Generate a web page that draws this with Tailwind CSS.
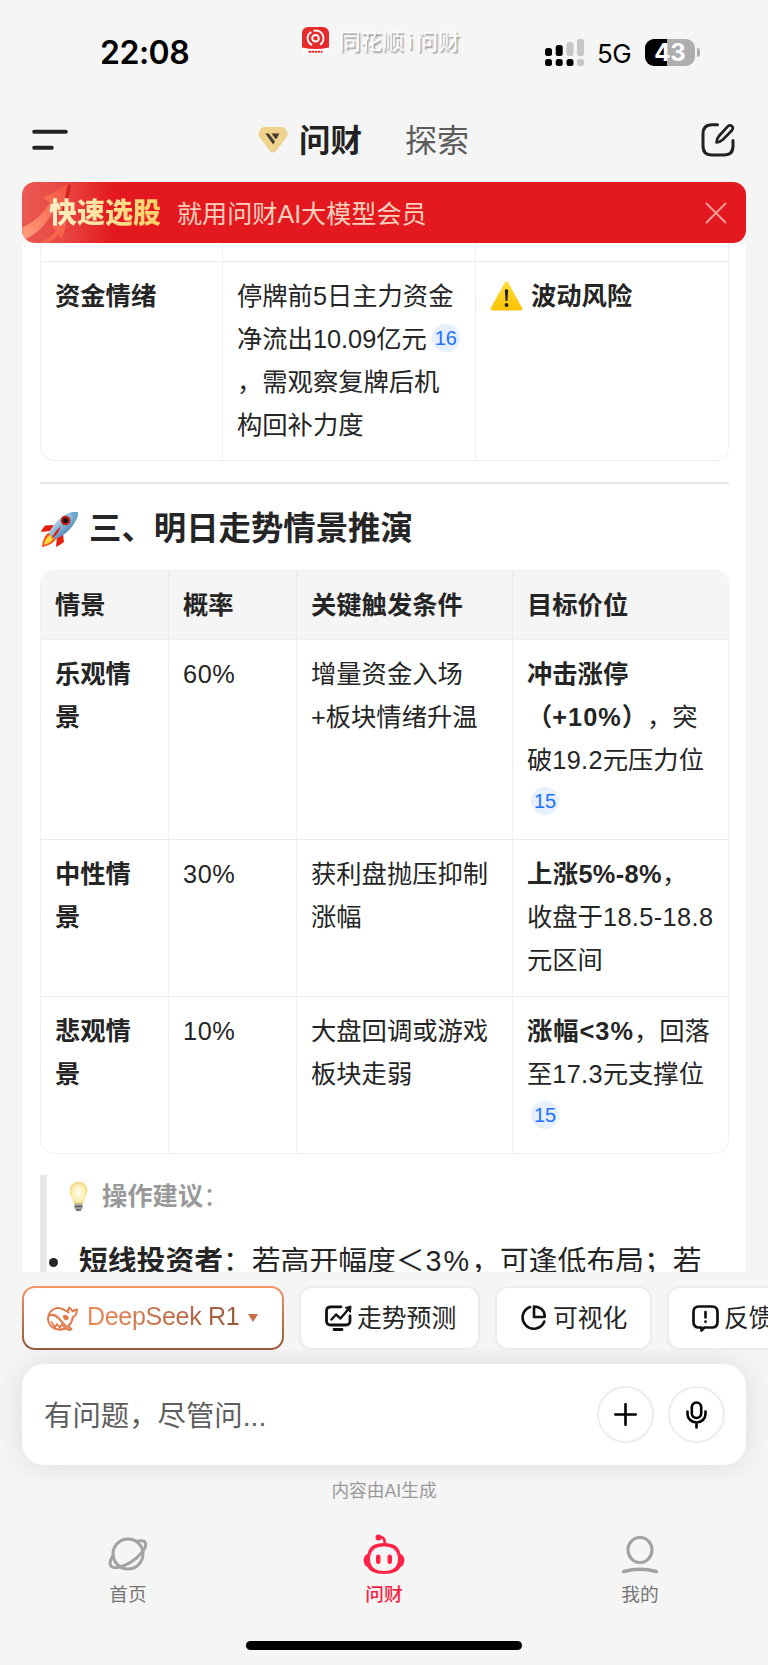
<!DOCTYPE html>
<html lang="zh-CN">
  <head>
    <meta charset="UTF-8" />
    <meta name="viewport" content="width=device-width, initial-scale=1.0" />
    <title>问财</title>
    <script src="https://cdn.jsdelivr.net/npm/@tailwindcss/browser@4"></script>
  </head>
  <body class="bg-[#f5f5f5] font-['Liberation_Sans','Noto_Sans_CJK_SC',sans-serif] text-[#252525] [text-spacing-trim:space-all]">
    <div class="w-[768px] h-[1665px] flex flex-col overflow-hidden">
      <!-- Status bar -->
      <div class="relative h-[98px] shrink-0 flex justify-between pl-[100px] pr-[68px] pt-[32px] text-black">
        <span class="font-['Inter',sans-serif] font-semibold text-[32px] leading-[41px] tracking-[-0.5px]">22:08</span>
        <div class="absolute left-[302px] top-[26px] flex items-center gap-[10px]">
          <svg class="w-[27px] h-[28px]" viewBox="0 0 27 28">
            <rect width="27" height="27" rx="6" fill="#fff" />
            <path d="M0 20.500V6a6 6 0 0 1 6-6h15a6 6 0 0 1 6 6v14.500q-13.500 3-27 0z" fill="#e62a2c" />
            <path d="M7 6.500A8 8 0 0 0 10 18.200M11.500 3.800A7.800 7.800 0 0 1 18 17.800" fill="none" stroke="#fff" stroke-width="1.900" />
            <circle cx="13.500" cy="11.300" r="3.300" fill="none" stroke="#fff" stroke-width="2" />
            <circle cx="8.300" cy="5.800" r="1.300" fill="#fff" />
            <path d="M6.500 24.800h14" stroke="#e62a2c" stroke-width="2" stroke-dasharray="2.500 .6" />
          </svg>
          <span class="mt-[2px] text-[21.600px] leading-[28px] text-white whitespace-nowrap [text-shadow:1.5px_1.500px_1.500px_#999]">同花顺<span class="mx-[4px]">i</span>问财</span>
        </div>
        <div class="flex h-[41px] items-center">
          <svg class="w-[40px] h-[28px]" viewBox="0 0 40 28">
            <g fill="#000">
              <rect x="0" y="9" width="7" height="8" rx="2.500" />
              <rect x="10.700" y="6" width="7" height="11" rx="2.500" />
              <rect x="0" y="20" width="7" height="7" rx="2.500" />
              <rect x="10.700" y="20" width="7" height="7" rx="2.500" />
              <rect x="21.500" y="20" width="7" height="7" rx="2.500" />
            </g>
            <g fill="#c6c6c6">
              <rect x="21.500" y="3" width="7" height="14" rx="2.500" />
              <rect x="32" y="0" width="7" height="17" rx="2.500" />
              <rect x="32" y="20" width="7" height="7" rx="2.500" />
            </g>
          </svg>
          <span class="ml-[12px] mt-[2px] w-[36px] font-['Inter',sans-serif] text-[26px] leading-[28px] tracking-[-0.5px]">5G</span>
          <div class="ml-[12px] w-[50px] h-[27px] rounded-[9px] bg-[linear-gradient(90deg,#000_44%,#aeaeae_44%)] text-white text-center font-['Inter',sans-serif] font-bold text-[24px] leading-[27px]">43</div>
          <div class="ml-[2px] w-[3px] h-[9px] rounded-r-full bg-[#aeaeae]"></div>
        </div>
      </div>

      <!-- Header -->
      <div class="h-[84px] shrink-0 flex items-center pl-[32px] pr-[33px]">
        <svg class="w-[36px] h-[22px]" viewBox="0 0 36 22">
          <path d="M2.200 2.700h31.600M2.200 18.800h17.600" stroke="#222" stroke-width="4" stroke-linecap="round" />
        </svg>
        <div class="flex items-center ml-[190px]">
          <svg class="w-[30px] h-[26px]" viewBox="0 0 30 26">
            <path d="M6 0h18q2 0 3 1.500l2.300 4q1 1.800 0 3.500L18.500 23.500q-3.500 4-7 0L.8 9q-1-1.700 0-3.500l2.200-4Q4 0 6 0z" fill="#efd28b" />
            <path d="M7.300 6.500h3.500l6.200 8-1.800 3zM13.500 6.500h3l2.800 3.700-1.700 2z" fill="#463d33" />
            <path d="M15.800 6.500h5.700l-3.200 5.500z" fill="#463d33" />
          </svg>
          <span class="ml-[11px] mt-[2px] text-[31.500px] font-bold leading-[44px] text-[#222]">问财</span>
          <span class="ml-[43px] mt-[2px] text-[32px] leading-[44px] text-[#5c5c5c]">探索</span>
        </div>
        <svg class="ml-auto w-[34px] h-[34px]" viewBox="0 0 34 34" fill="none" stroke="#222" stroke-width="3" stroke-linecap="round" stroke-linejoin="round">
          <path d="M16.500 1.800H11Q2 1.800 2 11v12q0 9 9 9h12q9 0 9-9v-5.500" />
          <path d="M15.500 19.500q.3-4 2.500-6.500L27 3.200q2-1.800 4 0 1.700 1.800 0 4L22 16.500q-3 2.700-6.500 3z" stroke-width="2.700" />
        </svg>
      </div>

      <!-- Promo banner -->
      <div class="relative z-10 mx-[22px] h-[61px] shrink-0 flex items-center rounded-[13px] overflow-hidden bg-[#e3191f] bg-[linear-gradient(90deg,#ea5a54_0,#e8443f_45px,#e3191f_92px)] pl-[27px] pr-[19px]">
        <svg class="absolute left-0 top-0 w-[60px] h-[61px]" viewBox="0 0 60 61">
          <defs>
            <linearGradient id="arrow" x1="0" y1="1" x2="1" y2="0">
              <stop offset="0" stop-color="#ffa27c" />
              <stop offset="1" stop-color="#f2503d" />
            </linearGradient>
          </defs>
          <path d="M46 2 49 4 42 36 38 28z" fill="#cb231d" />
          <path d="M0 46Q19 37 28 20l-7-4L46 2 39 33l-7-6Q23 48 2 58z" fill="url(#arrow)" />
          <path d="M17 61q10-4 17-12l-4-4 15-6-5 18-4-4q-4 5-10 8z" fill="#f5654c" />
        </svg>
        <span class="relative mt-[3px] text-[28px] leading-[40px] font-black bg-gradient-to-r from-[#fff0c8] to-[#ffcf62] bg-clip-text text-transparent">快速选股</span>
        <span class="ml-[16px] mt-[3px] text-[25.100px] leading-[40px] text-[#ffcfbd]">就用问财AI大模型会员</span>
        <svg class="ml-auto w-[22px] h-[22px]" viewBox="0 0 22 22">
          <path d="M1 1l20 20M21 1 1 21" stroke="#f8a19c" stroke-width="1.800" />
        </svg>
      </div>

      <!-- Answer content -->
      <div class="mx-[22px] h-[1029px] shrink-0 bg-white overflow-hidden pl-[18px] pr-[17px] text-[25.300px] leading-[43px]">
        <div class="border border-t-0 border-[#efefef] rounded-b-[14px]">
          <div class="grid grid-cols-[182px_253px_1fr] h-[18px]">
            <div class="border-r border-[#efefef]"></div>
            <div class="border-r border-[#efefef]"></div>
          </div>
          <div class="grid grid-cols-[182px_253px_1fr] h-[199px] border-t border-[#ececec] whitespace-nowrap">
            <div class="border-r border-[#efefef] px-[14px] pt-[13px] font-bold">资金情绪</div>
            <div class="border-r border-[#efefef] px-[14px] pt-[13px]">
              停牌前5日主力资金<br />净流出10.09亿元<span class="inline-flex items-center justify-center align-[3px] ml-[5px] size-[28px] rounded-full bg-[#e6f0ff] text-[#1f71ff] text-[20px] leading-none">16</span><br />，需观察复牌后机<br />构回补力度
            </div>
            <div class="px-[14px] pt-[13px] font-bold flex items-start">
              <svg class="mt-[6px] w-[33px] h-[30px]" viewBox="0 0 33 30">
                <defs>
                  <linearGradient id="warn" x1="0" y1="0" x2="0" y2="1">
                    <stop offset="0" stop-color="#ffdf3d" />
                    <stop offset="1" stop-color="#fcc200" />
                  </linearGradient>
                </defs>
                <path d="M14.800 1.500q1.700-2.500 3.400 0l14 25.500q1 2.200-1.500 2.500H2.300q-2.500-.3-1.500-2.500z" fill="url(#warn)" />
                <path d="M14.800 9q1.700-1.500 3.400 0l-.8 11h-1.800z" fill="#222" />
                <circle cx="16.500" cy="24" r="1.900" fill="#222" />
              </svg>
              <span class="ml-[8px]">波动风险</span>
            </div>
          </div>
        </div>

        <div class="mt-[21px] h-[2px] bg-[#e8e8e8]"></div>

        <h2 class="mt-[20px] h-[50px] flex items-center text-[32.400px] font-bold whitespace-nowrap">
          <svg class="w-[39px] h-[37px]" viewBox="0 0 39 37">
            <defs>
              <linearGradient id="hull" x1="0" y1="0" x2="1" y2="1">
                <stop offset=".1" stop-color="#e8f1f8" />
                <stop offset=".5" stop-color="#7fb0d6" />
                <stop offset=".9" stop-color="#2d618f" />
              </linearGradient>
            </defs>
            <path d="M14 14 5 14.500Q2 18 1 21l9-1zM23 23l1 8q-4 3-8 5l1-10z" fill="#e3200f" />
            <path d="M10 21Q3 24 2 36q9-1 15-9z" fill="#f6501a" />
            <path d="M10 24q-5 3-6 10 7-2 10-7z" fill="#ffdd3c" />
            <path d="M38 1Q26 0 17 10 11 17 9 23l6 5q9-3 15-10Q38 9 38 1z" fill="url(#hull)" />
            <path d="M38 1q-4-.5-8 1l6.500 6.500Q38 5 38 1z" fill="#6ca4cf" />
            <circle cx="25.500" cy="9.500" r="4.800" fill="#c01c17" />
            <circle cx="25.500" cy="9.500" r="2.600" fill="#1b0f14" />
            <path d="M21 15q-6 5-9 11l-1 2q7-4 10-13z" fill="#dc1f12" />
          </svg>
          <span class="ml-[10px]">三、明日走势情景推演</span>
        </h2>

        <div class="mt-[16px] border border-[#efefef] rounded-[14px] overflow-hidden whitespace-nowrap">
          <div class="grid grid-cols-[128px_128px_216px_1fr] h-[68px] bg-[#f5f5f5] font-bold">
            <div class="border-r border-[#e9e9e9] px-[14px] pt-[13px]">情景</div>
            <div class="border-r border-[#e9e9e9] px-[14px] pt-[13px]">概率</div>
            <div class="border-r border-[#e9e9e9] px-[14px] pt-[13px]">关键触发条件</div>
            <div class="px-[14px] pt-[13px]">目标价位</div>
          </div>
          <div class="grid grid-cols-[128px_128px_216px_1fr] h-[200px] border-t border-[#efefef]">
            <div class="border-r border-[#efefef] px-[14px] pt-[13px] font-bold">乐观情<br />景</div>
            <div class="border-r border-[#efefef] px-[14px] pt-[13px] tracking-[0.6px]">60%</div>
            <div class="border-r border-[#efefef] px-[14px] pt-[13px]">增量资金入场<br />+板块情绪升温</div>
            <div class="px-[14px] pt-[13px]">
              <b>冲击涨停<br />（<span class="tracking-[1px]">+10%</span>）</b>，突<br />破<span class="tracking-[0.3px]">19.2</span>元压力位<br /><span class="flex items-center justify-center ml-[4px] mt-[5px] size-[28px] rounded-full bg-[#e6f0ff] text-[#1f71ff] text-[20px] leading-none">15</span>
            </div>
          </div>
          <div class="grid grid-cols-[128px_128px_216px_1fr] h-[157px] border-t border-[#ececec]">
            <div class="border-r border-[#efefef] px-[14px] pt-[13px] font-bold">中性情<br />景</div>
            <div class="border-r border-[#efefef] px-[14px] pt-[13px] tracking-[0.6px]">30%</div>
            <div class="border-r border-[#efefef] px-[14px] pt-[13px]">获利盘抛压抑制<br />涨幅</div>
            <div class="px-[14px] pt-[13px]"><b class="tracking-[0.4px]">上涨5%-8%</b>，<br />收盘于<span class="tracking-[0.4px]">18.5-18.8</span><br />元区间</div>
          </div>
          <div class="grid grid-cols-[128px_128px_216px_1fr] h-[157px] border-t border-[#ececec]">
            <div class="border-r border-[#efefef] px-[14px] pt-[13px] font-bold">悲观情<br />景</div>
            <div class="border-r border-[#efefef] px-[14px] pt-[13px] tracking-[0.6px]">10%</div>
            <div class="border-r border-[#efefef] px-[14px] pt-[13px]">大盘回调或游戏<br />板块走弱</div>
            <div class="px-[14px] pt-[13px]">
              <b class="tracking-[1px]">涨幅&lt;3%</b>，回落<br />至<span class="tracking-[0.3px]">17.3</span>元支撑位<br /><span class="flex items-center justify-center ml-[4px] mt-[5px] size-[28px] rounded-full bg-[#e6f0ff] text-[#1f71ff] text-[20px] leading-none">15</span>
            </div>
          </div>
        </div>

        <div class="mt-[21px] h-[200px] border-l-[7px] border-[#e8e8e8] whitespace-nowrap">
          <div class="flex items-start pl-[22px] text-[#999] font-bold">
            <svg class="mt-[6px] w-[19px] h-[31px]" viewBox="0 0 19 31">
              <defs>
                <radialGradient id="glow">
                  <stop offset="0" stop-color="#fffdf0" />
                  <stop offset=".7" stop-color="#fdf0b4" />
                  <stop offset="1" stop-color="#eed67c" />
                </radialGradient>
              </defs>
              <path d="M9.500.5a9 9.500 0 0 1 9 9.500c0 5-4 7-4.500 13H5C4.500 17 .5 15 .5 10a9 9.500 0 0 1 9-9.500z" fill="url(#glow)" />
              <path d="M5.500 22.500h8v5q-4 5-8 0z" fill="#a7a49c" />
              <path d="M5.500 25.500h8M7 29h5" stroke="#615e58" stroke-width="1.300" />
            </svg>
            <span class="ml-[14px]">操作建议<span class="font-normal">：</span></span>
          </div>
          <div class="mt-[20px] flex items-center text-[28.800px] leading-[46px]">
            <span class="ml-[2px] mt-[3px] size-[9px] rounded-full bg-[#252525]"></span>
            <span class="ml-[21px]"><b>短线投资者</b>：若高开幅度＜<span class="ml-px tracking-[2px]">3%</span>，可逢低布局；若</span>
          </div>
        </div>
      </div>

      <!-- Quick actions -->
      <div class="h-[78px] shrink-0 flex items-start gap-[15px] pl-[22px] pt-[14px] text-[24.800px] whitespace-nowrap overflow-hidden">
        <div class="w-[262px] h-[64px] shrink-0 rounded-[13px] p-[2px] bg-gradient-to-b from-[#f29765] to-[#96583c]">
          <div class="h-full rounded-[11px] bg-white flex items-center pl-[23px]">
            <svg class="w-[31px] h-[25px]" viewBox="0 0 31 25" fill="none" stroke="#e27a4b" stroke-width="2" stroke-linejoin="round" stroke-linecap="round">
              <path d="M16.500 3.500Q10.500.5 6 3.500 1 7 1 13q.5 6 5.500 9 6 3 11.500.5l5 1.500 1.500-1-3.500-2.500q4-4 5-9.500 3.500-1 4-7.500-2-.5-4 2-1.500-1.500-3.500-4-2 2-1 5z" />
              <path d="M2 9.500q5.500-2 9.500 2.500 3.500 4 8 9" />
              <path d="M4.500 16l3.500 5.500 2-3.500 3 4 1.500-3.500 3 3" stroke-width="1.700" />
              <path d="M17 10q2.500-1 4 2-2 2.500-3.500.5z" fill="#e27a4b" />
            </svg>
            <span class="ml-[9px] text-[25px] tracking-[-0.3px] leading-[36px] mb-[4px] bg-gradient-to-r from-[#ee8857] to-[#99583b] bg-clip-text text-transparent">DeepSeek R1</span>
            <span class="ml-[9px] mb-[1px] border-x-[5px] border-x-transparent border-t-[8px] border-t-[#c96f48]"></span>
          </div>
        </div>
        <div class="w-[181px] h-[64px] shrink-0 flex items-center rounded-[13px] border-2 border-[#ececec] bg-white pl-[24px]">
          <svg class="w-[27px] h-[26px]" viewBox="0 0 27 26" fill="none" stroke="#111" stroke-width="2.800" stroke-linecap="round" stroke-linejoin="round">
            <path d="M16 1.800H6Q1.500 1.800 1.500 6v10q0 4 4.500 4h14.500q4.500 0 4.500-4v-5M9 24.500h8" />
            <path d="M6.500 14.500l4.500-5 4.500 4L23.500 4" stroke-width="2.400" />
            <path d="M20.500 2.500 26 1l-.5 6z" fill="#111" stroke-width="1" />
          </svg>
          <span class="ml-[5px] mt-[2px]">走势预测</span>
        </div>
        <div class="w-[157px] h-[64px] shrink-0 flex items-center rounded-[13px] border-2 border-[#ececec] bg-white pl-[24px]">
          <svg class="w-[25px] h-[26px]" viewBox="0 0 25 26" fill="none" stroke="#111" stroke-width="2.600" stroke-linecap="round" stroke-linejoin="round">
            <path d="M9 2A11.200 11.200 0 1 0 23.300 16.500" />
            <path d="M13 1.600V12h10.600Q24 7 20.500 4 17.500 1.500 13 1.600z" />
          </svg>
          <span class="ml-[7px] mt-[2px]">可视化</span>
        </div>
        <div class="w-[157px] h-[64px] shrink-0 flex items-center rounded-[13px] border-2 border-[#ececec] bg-white pl-[23px]">
          <svg class="w-[27px] h-[27px]" viewBox="0 0 27 27" fill="none" stroke="#111" stroke-width="2.700" stroke-linecap="round" stroke-linejoin="round">
            <path d="M7 1.500h13q5.500 0 5.500 5.500v10q0 5.500-5.500 5.500h-7.500L9.500 25.500V22.500H7q-5.500 0-5.500-5.500V7q0-5.500 5.500-5.500z" />
            <path d="M13.500 7v5.500M13.500 16.700v.1" />
          </svg>
          <span class="ml-[5px] mt-[2px]">反馈</span>
        </div>
      </div>

      <!-- Ask box -->
      <div class="h-[129px] shrink-0 overflow-hidden px-[22px] pt-[14px]">
        <div class="h-[101px] flex items-center rounded-[22px] bg-white shadow-[0_0_32px_rgba(0,0,0,0.1)] pl-[22px] pr-[21px]">
          <span class="mt-[2px] text-[28.400px] leading-[42px] text-[#5e5e5e]">有问题，尽管问...</span>
          <div class="ml-auto size-[57px] flex items-center justify-center rounded-full border-2 border-[#ededed]">
            <svg class="w-[23px] h-[23px]" viewBox="0 0 23 23">
              <path d="M11.500 1.200v20.600M1.200 11.500h20.600" stroke="#000" stroke-width="2.600" stroke-linecap="round" />
            </svg>
          </div>
          <div class="ml-[14px] size-[57px] flex items-center justify-center rounded-full border-2 border-[#ededed]">
            <svg class="w-[21px] h-[28px]" viewBox="0 0 21 28" fill="none" stroke="#000" stroke-width="2.600" stroke-linecap="round">
              <rect x="5.800" y="1.500" width="9.400" height="15.500" rx="4.700" />
              <path d="M1.500 10.500v2.500a9 8.500 0 0 0 18 0v-2.500M10.500 21.500v5" />
            </svg>
          </div>
        </div>
      </div>
      <div class="h-[37px] shrink-0 text-center text-[17.700px] leading-[24px] text-[#999]">内容由AI生成</div>

      <!-- Tab bar -->
      <div class="h-[149px] shrink-0 flex flex-col items-center">
        <div class="w-full grid grid-cols-3 text-[18.700px] leading-[26px] text-[#757575]">
          <div class="flex flex-col items-center pt-[20px]">
            <svg class="w-[40px] h-[36px]" viewBox="0 0 40 36" fill="none" stroke="#a2a2a2" stroke-width="3">
              <circle cx="20" cy="18" r="15" />
              <path d="M27.500 5.500Q36 3.500 37.500 7c1.500 5-6 13.500-14.500 19C14 31.500 5 33.500 2.500 29.500 1.500 27 2.500 23 6 18.500" />
            </svg>
            <span class="mt-[10px]">首页</span>
          </div>
          <div class="flex flex-col items-center pt-[18px] text-[#fb2143]">
            <svg class="w-[42px] h-[41px]" viewBox="0 0 42 41">
              <path d="M4.500 20q2-11 16.500-11t16.500 11q3 .5 4 5.500-.5 6.500-4 7.500-3 7-16.500 7T4.500 33Q1 32 .5 25.500q1-5 4-5.500z" fill="#ff2447" />
              <path d="M21 12.500c9 0 14 4.500 14 12.500S30 37 21 37 7 33 7 25s5-12.500 14-12.500z" fill="#f5f5f5" />
              <rect x="13" y="20.500" width="4.500" height="9.500" rx="2.250" fill="#ff2447" />
              <rect x="24.500" y="20.500" width="4.500" height="9.500" rx="2.250" fill="#ff2447" />
              <circle cx="15.500" cy="3.500" r="3" fill="#ff2447" />
              <path d="M15.500 3.500q6.500-2 6.500 7" fill="none" stroke="#ff2447" stroke-width="2.600" />
            </svg>
            <span class="mt-[7px] font-medium">问财</span>
          </div>
          <div class="flex flex-col items-center pt-[20px]">
            <svg class="w-[36px] h-[38px]" viewBox="0 0 36 38" fill="none" stroke="#a2a2a2" stroke-width="3.200">
              <ellipse cx="18" cy="14" rx="12" ry="12.500" />
              <path d="M1.800 35.500q16.200-4.500 32.400 0" stroke-width="3.600" stroke-linecap="round" />
            </svg>
            <span class="mt-[8px]">我的</span>
          </div>
        </div>
        <div class="mt-[33px] w-[276px] h-[9px] rounded-full bg-black"></div>
      </div>
    </div>
  </body>
</html>
